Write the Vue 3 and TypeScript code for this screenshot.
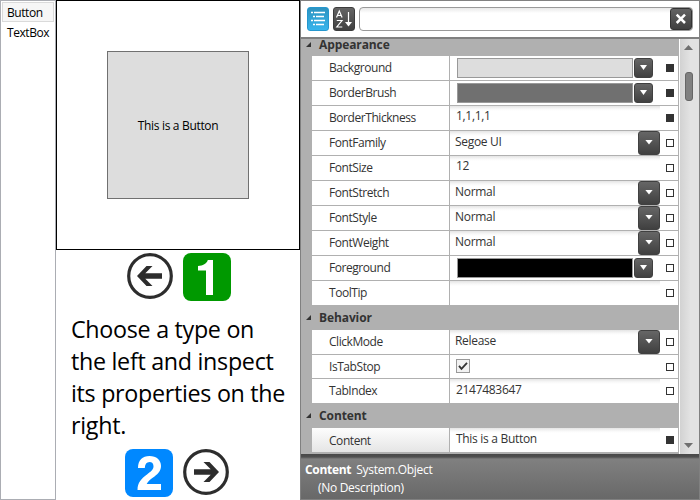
<script setup lang="ts">
type Kind = 'swatch' | 'text' | 'combo' | 'check'

interface Property {
  name: string
  kind: Kind
  value?: string
  tone?: string
  isSet?: boolean
  selected?: boolean
}

interface Group {
  title: string
  properties: Property[]
}

const types: string[] = ['Button', 'TextBox']

const groups: Group[] = [
  {
    title: 'Appearance',
    properties: [
      { name: 'Background', kind: 'swatch', tone: 'light', isSet: true },
      { name: 'BorderBrush', kind: 'swatch', tone: 'gray', isSet: true },
      { name: 'BorderThickness', kind: 'text', value: '1,1,1,1', isSet: true },
      { name: 'FontFamily', kind: 'combo', value: 'Segoe UI' },
      { name: 'FontSize', kind: 'text', value: '12' },
      { name: 'FontStretch', kind: 'combo', value: 'Normal' },
      { name: 'FontStyle', kind: 'combo', value: 'Normal' },
      { name: 'FontWeight', kind: 'combo', value: 'Normal' },
      { name: 'Foreground', kind: 'swatch', tone: 'black' },
      { name: 'ToolTip', kind: 'text', value: '' },
    ],
  },
  {
    title: 'Behavior',
    properties: [
      { name: 'ClickMode', kind: 'combo', value: 'Release' },
      { name: 'IsTabStop', kind: 'check' },
      { name: 'TabIndex', kind: 'text', value: '2147483647' },
    ],
  },
  {
    title: 'Content',
    properties: [
      { name: 'Content', kind: 'text', value: 'This is a Button', isSet: true, selected: true },
    ],
  },
]
</script>

<template>
  <div class="window">
    <ul class="types">
      <li v-for="(type, i) in types" :key="type" :class="{ active: i === 0 }">{{ type }}</li>
    </ul>

    <section class="stage">
      <div class="preview">
        <div class="sample">This is a Button</div>
      </div>
      <div class="step first">
        <svg class="arrow" viewBox="0 0 46 46">
          <circle cx="23" cy="23" r="21.3" />
          <path d="M10 23 L19.500 13 H25.500 L18.300 20.200 H35 V25.800 H18.300 L25.500 33 H19.500 Z" />
        </svg>
        <svg class="badge green" viewBox="0 0 48 48">
          <path d="M30 7 V42 H23 V17.500 H15 V13 C20 12.600 23.500 11 24.800 7 Z" />
        </svg>
      </div>
      <p class="help">Choose a type on<br />the left and inspect<br />its properties on the<br />right.</p>
      <div class="step second">
        <svg class="badge blue" viewBox="0 0 48 48">
          <path d="M13 19 C13 11 17.500 7 24.500 7 C31.500 7 36 11 36 17 C36 21.500 33.500 24.500 29.500 27.500 C26 30 23 32 21.700 35 H36 V41 H12.500 C12.500 33.500 16.500 29.500 22 25.500 C26 22.500 28.500 20.500 28.500 17.300 C28.500 14.500 27 13 24.500 13 C21.500 13 20 15 19.800 19 Z" />
        </svg>
        <svg class="arrow" viewBox="0 0 46 46">
          <circle cx="23" cy="23" r="21.3" />
          <path d="M36 23 L26.500 13 H20.500 L27.700 20.200 H11 V25.800 H27.700 L20.500 33 H26.500 Z" />
        </svg>
      </div>
    </section>

    <section class="inspector">
      <header class="toolbar">
        <div class="tool on">
          <svg viewBox="0 0 22 24">
            <path class="lines" d="M4 5.500H6M7 5.500H18M6 9.500H8M9 9.500H17M4 13.500H6M7 13.500H18M6 17.500H8M9 17.500H17" />
          </svg>
        </div>
        <div class="tool">
          <svg viewBox="0 0 22 24">
            <path d="M3.500 10.500 L6.300 4 L9.100 10.500 M4.500 8.500 H8.100 M3.800 13.500 H9 L3.800 20 H9.300 M15.500 5 V16" />
            <path class="head" d="M12 15 H19 L15.500 19.500 Z" />
          </svg>
        </div>
        <div class="search">
          <div class="clear">
            <svg viewBox="0 0 22 22"><path d="M6.700 6.700 L15 15 M15 6.700 L6.700 15" /></svg>
          </div>
        </div>
      </header>

      <div class="body">
        <div class="list">
          <div v-for="group in groups" :key="group.title" class="group">
            <h2><i class="expander"></i>{{ group.title }}</h2>
            <div
              v-for="prop in group.properties"
              :key="prop.name"
              class="row"
              :class="[prop.kind, { selected: prop.selected }]"
            >
              <div class="name">{{ prop.name }}</div>
              <div class="editor">
                <template v-if="prop.kind === 'swatch'">
                  <div class="color" :class="prop.tone"></div>
                  <div class="drop small"></div>
                </template>
                <svg v-else-if="prop.kind === 'check'" class="box" viewBox="0 0 14 14">
                  <rect x=".5" y=".5" width="13" height="13" />
                  <path d="M3 6.800 L5.500 9.800 L11 3.800" />
                </svg>
                <template v-else>
                  <span class="value">{{ prop.value }}</span>
                  <div v-if="prop.kind === 'combo'" class="drop"></div>
                </template>
              </div>
              <i class="marker" :class="{ filled: prop.isSet }"></i>
            </div>
          </div>
        </div>
        <div class="scrollbar">
          <i class="up"></i>
          <i class="thumb"></i>
          <i class="down"></i>
        </div>
      </div>

      <footer>
        <div><b>Content</b><span>System.Object</span></div>
        <p>(No Description)</p>
      </footer>
    </section>
  </div>
</template>

<style>
body {
  margin: 0;
  background: #fff;
}
</style>

<style scoped>
* {
  box-sizing: border-box;
}
.window {
  display: flex;
  width: 700px;
  height: 500px;
  overflow: hidden;
  font-family: 'Open Sans', 'Noto Sans', sans-serif;
  font-size: 12px;
  letter-spacing: -0.44px;
  color: #000;
}
ul, p, h2 {
  margin: 0;
  padding: 0;
}
.types {
  width: 56px;
  border: 1px solid #abadb3;
  padding: 1px;
  list-style: none;
}
.types li {
  height: 20px;
  line-height: 20px;
  padding-left: 4px;
  border: 1px solid transparent;
  white-space: nowrap;
}
.types .active {
  background: #f6f6f6;
  border-color: #dadada;
}
.stage {
  width: 244px;
  display: flex;
  flex-direction: column;
}
.preview {
  height: 250px;
  border: 1px solid #000;
  display: flex;
  align-items: center;
  justify-content: center;
}
.sample {
  width: 142px;
  height: 148px;
  background: #ddd;
  border: 1px solid #707070;
  display: flex;
  align-items: center;
  justify-content: center;
  letter-spacing: -0.32px;
}
.step {
  display: flex;
  gap: 10px;
}
.first {
  padding: 3px 0 0 71px;
}
.second {
  padding: 7px 0 0 69px;
}
.arrow {
  width: 46px;
  height: 46px;
}
.arrow circle {
  fill: none;
  stroke: #2d2d2d;
  stroke-width: 3.2;
}
.arrow path {
  fill: #2d2d2d;
}
.badge {
  width: 48px;
  height: 48px;
  border-radius: 8px;
}
.badge path {
  fill: #fff;
}
.green {
  background: #090;
}
.blue {
  background: #08f;
}
.help {
  padding: 12px 0 0 15px;
  height: 141px;
  font-size: 23.3px;
  line-height: 32px;
  letter-spacing: -0.3px;
  white-space: nowrap;
}
.inspector {
  width: 400px;
  border: 1px solid #808080;
  display: flex;
  flex-direction: column;
  color: #333;
}
.toolbar {
  height: 38px;
  border-bottom: 2px solid #808080;
  padding: 6px;
  display: flex;
  gap: 4px;
}
.tool {
  width: 22px;
  height: 24px;
  border-radius: 3px;
  border: 1px solid #3c3c3c;
  background: linear-gradient(#646464, #404040);
}
.tool.on {
  border-color: #2597ce;
  background: linear-gradient(#2d93c0, #37b5ed);
}
.tool svg {
  display: block;
  width: 22px;
  height: 24px;
  margin: -1px;
}
.tool path {
  fill: none;
  stroke: #fff;
  stroke-width: 1.2;
}
.tool .lines {
  stroke-width: 1.6;
}
.tool .head {
  fill: #fff;
  stroke: none;
}
.search {
  width: 334px;
  height: 24px;
  border: 1px solid #999;
  border-radius: 4px;
  background: linear-gradient(#e8e8e8, #fff 5px);
  display: flex;
  justify-content: flex-end;
}
.clear {
  width: 22px;
  height: 22px;
  border: 1px solid #333;
  border-radius: 3px;
  background: linear-gradient(#636363, #404040);
}
.clear svg {
  display: block;
  width: 22px;
  height: 22px;
  margin: -1px;
}
.clear path {
  stroke: #fff;
  stroke-width: 2.5;
}
.body {
  height: 415px;
  display: flex;
}
.list {
  width: 378px;
  padding-left: 11px;
  background: #b0b0b0;
}
.group h2 {
  height: 25px;
  line-height: 26px;
  font-size: 12px;
  letter-spacing: -0.1px;
  font-weight: 700;
  margin-left: -11px;
  display: flex;
  align-items: center;
  gap: 8px;
  padding-left: 5px;
}
.group:last-child h2 {
  line-height: 27px;
}
.group:first-child h2 {
  height: 17px;
  line-height: 12px;
  align-items: flex-start;
}
.expander {
  width: 5px;
  height: 5px;
  background: #333;
  clip-path: polygon(100% 0, 100% 100%, 0 100%);
}
.group:first-child .expander {
  margin-top: 3px;
}
.row {
  display: flex;
  height: 25px;
  width: 367px;
  background: #fff;
  border-bottom: 1px solid #b0b0b0;
  border-right: 1px solid #b0b0b0;
}
.group:not(:last-child) .row:last-child {
  height: 24px;
  border-bottom: 0;
}
.row.check {
  height: 24px;
}
.name {
  width: 138px;
  padding-left: 17px;
  line-height: 24px;
  border-right: 1px solid #b0b0b0;
}
.selected .name {
  background: linear-gradient(#fdfdfd, #e5e5e5);
  line-height: 25px;
}
.editor {
  width: 210px;
  display: flex;
  justify-content: space-between;
}
.text .editor,
.combo .editor {
  background: linear-gradient(#e4e4e4, #f8f8f8 3px, #fff 5px);
}
.value {
  padding-left: 6px;
  line-height: 20px;
  letter-spacing: -0.3px;
}
.combo .value {
  padding-left: 5px;
  line-height: 22px;
}
.group:not(:first-child) .text .value {
  line-height: 21px;
}
.swatch .editor {
  justify-content: flex-start;
  padding: 2px 0 0 7px;
  gap: 1px;
}
.color {
  width: 176px;
  height: 20px;
  border: 1px solid #999;
}
.light { background: #ddd; }
.gray { background: #707070; }
.black { background: #000; }
.drop {
  width: 22px;
  height: 24px;
  border: 1px solid #404040;
  border-radius: 3px;
  background: linear-gradient(#666, #404040);
  display: flex;
  align-items: center;
  justify-content: center;
}
.drop.small {
  width: 19px;
  height: 20px;
}
.drop::before {
  content: '';
  width: 8px;
  height: 5px;
  margin-top: -2px;
  background: #fff;
  clip-path: polygon(0 0, 100% 0, 50% 100%);
}
.drop.small::before {
  width: 7px;
  margin-top: -1px;
}
.box {
  width: 14px;
  height: 14px;
  margin: 4px 0 0 6px;
}
.box rect {
  fill: #f2f2f2;
  stroke: #999;
}
.box path {
  fill: none;
  stroke: #333;
  stroke-width: 1.8;
}
.marker {
  width: 8px;
  height: 8px;
  margin: 8px 0 0 6px;
  border: 1px solid #333;
}
.marker.filled {
  background: #333;
}
.scrollbar {
  width: 20px;
  padding-right: 2px;
  border-left: 1px solid #fff;
  background: linear-gradient(90deg, #d2d2d2, #e2e2e2 10px, #e2e2e2);
  display: flex;
  flex-direction: column;
  align-items: center;
}
.up,
.down {
  width: 9px;
  height: 5px;
  background: #707070;
}
.up {
  margin-top: 6px;
  clip-path: polygon(0 100%, 50% 0, 100% 100%);
}
.down {
  margin-top: auto;
  margin-bottom: 6px;
  clip-path: polygon(0 0, 50% 100%, 100% 0);
}
.thumb {
  width: 8px;
  height: 29px;
  margin-top: 22px;
  border-radius: 3px;
  border: 1px solid #666;
  background: #808080;
}
footer {
  height: 45px;
  padding: 7px 0 0 4px;
  background: linear-gradient(#484848, #505050 3px, #808080 5px, #686868);
  color: #fff;
  line-height: 18px;
  letter-spacing: -0.3px;
}
footer b {
  font-size: 12px;
  margin-right: 5px;
}
footer p {
  padding-left: 13px;
}
</style>
